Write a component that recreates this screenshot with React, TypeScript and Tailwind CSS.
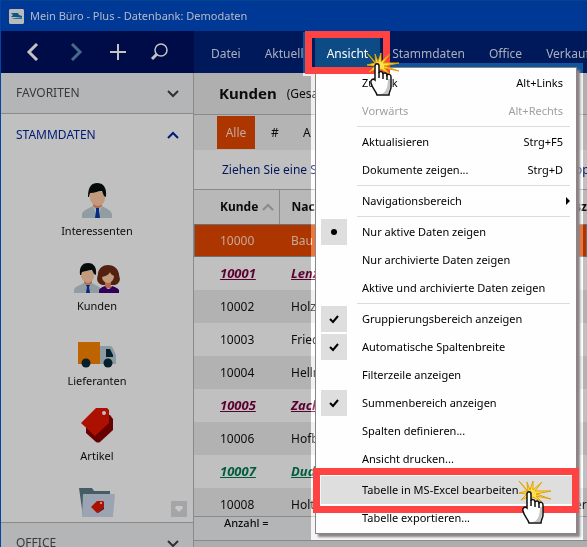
import React from "react";

type MenuEntry =
  | "separator"
  | { label: string; shortcut?: string; mark?: "check" | "dot"; disabled?: boolean; submenu?: boolean; active?: boolean };

const menuEntries: MenuEntry[] = [
  { label: "Zurück", shortcut: "Alt+Links" },
  { label: "Vorwärts", shortcut: "Alt+Rechts", disabled: true },
  "separator",
  { label: "Aktualisieren", shortcut: "Strg+F5" },
  { label: "Dokumente zeigen...", shortcut: "Strg+D" },
  "separator",
  { label: "Navigationsbereich", submenu: true },
  "separator",
  { label: "Nur aktive Daten zeigen", mark: "dot" },
  { label: "Nur archivierte Daten zeigen" },
  { label: "Aktive und archivierte Daten zeigen" },
  "separator",
  { label: "Gruppierungsbereich anzeigen", mark: "check" },
  { label: "Automatische Spaltenbreite", mark: "check" },
  { label: "Filterzeile anzeigen" },
  { label: "Summenbereich anzeigen", mark: "check" },
  { label: "Spalten definieren..." },
  { label: "Ansicht drucken..." },
  "separator",
  { label: "Tabelle in MS-Excel bearbeiten", active: true },
  { label: "Tabelle exportieren..." },
];

const rows = [
  { id: "10000", name: "Bau", tone: "selected" },
  { id: "10001", name: "Lenz", tone: "purple" },
  { id: "10002", name: "Holz", tone: "plain" },
  { id: "10003", name: "Fried", tone: "plain" },
  { id: "10004", name: "Hellm", tone: "plain" },
  { id: "10005", name: "Zach", tone: "purple" },
  { id: "10006", name: "Hofb", tone: "plain" },
  { id: "10007", name: "Duda", tone: "green" },
  { id: "10008", name: "Holt", tone: "plain", extra: "er" },
];

const toneClass: Record<string, string> = {
  selected: "text-[#c4aa98]",
  purple: "text-[13px] font-bold italic underline text-[#5a0030]",
  green: "text-[13px] font-bold italic underline text-[#005c3c]",
  plain: "text-[#0c0c0c]",
};

function Chevron({ d, color, width = 2 }: { d: string; color: string; width?: number }) {
  return (
    <svg width="18" height="18" viewBox="0 0 18 18" fill="none" stroke={color} strokeWidth={width} aria-hidden="true">
      <path d={d} />
    </svg>
  );
}

function ManIcon() {
  return (
    <svg width="30" height="35" viewBox="0 0 30 35" aria-hidden="true">
      <path d="M11 20h9v7h-9z" fill="#b5694f" />
      <path d="M0 35v-4c1-4 6-5 11-8l4 3 5-3c5 3 9 4 10 8v4z" fill="#909da2" />
      <path d="M11 23l4 4 5-4-4 9h-2z" fill="#a9b3b6" />
      <path d="M14 25h3v3l1 7h-5l1-7z" fill="#062a7d" />
      <path d="M8 9h15v6c0 4-3 8-7 8s-8-4-8-8z" fill="#c29a7c" />
      <path d="M6 14C6 3 10 0 15 0c6 0 10 4 9 14l-2-1-2-5c-4 0-7 2-12 2l-1 4z" fill="#070b0c" />
    </svg>
  );
}

function CoupleIcon() {
  return (
    <svg width="46" height="30" viewBox="0 0 46 30" aria-hidden="true">
      <path d="M10 17h8v7h-8z" fill="#b5694f" />
      <path d="M0 30v-3c1-4 5-4 10-7l4 3 4-3c5 3 8 3 9 7v3z" fill="#909da2" />
      <path d="M12 22h4l-1 2 1 6h-4l1-6z" fill="#062a7d" />
      <path d="M7 8h13v5c0 3-3 7-6 7s-7-4-7-7z" fill="#c29a7c" />
      <path d="M6 12C5 3 9 0 14 0s9 3 8 12l-2-1-2-4c-3 0-6 1-10 2l-1 3z" fill="#070b0c" />
      <path d="M24 19c-2-3 0-6 0-9 1-5 5-8 10-8s10 3 11 9c0 3 2 5 0 8-2 4-6 3-10 3s-9 1-11-3z" fill="#52210f" />
      <path d="M31 17h6v8h-6z" fill="#b5694f" />
      <path d="M25 30v-3c1-2 3-3 6-4 2 4 5 4 7 0 3 1 6 2 7 4v3z" fill="#330057" />
      <path d="M28 14c5-1 7-3 8-5 1 3 3 3 4 4 0 4-3 7-6 7s-6-3-6-6z" fill="#c29a7c" />
    </svg>
  );
}

function TruckIcon() {
  return (
    <svg width="38" height="26" viewBox="0 0 38 26" aria-hidden="true">
      <path d="M0 0h22v22H0z" fill="#bd6400" />
      <path d="M22 4h10c3 0 4 5 6 9v9H22z" fill="#8b9ba4" />
      <path d="M28 7h4l3 6v2h-7z" fill="#06202b" />
      <circle cx="8" cy="21" r="4.500" fill="#071f2b" />
      <circle cx="30" cy="21" r="4.500" fill="#071f2b" />
    </svg>
  );
}

function TagIcon() {
  return (
    <svg width="32" height="36" viewBox="0 0 32 36" aria-hidden="true">
      <path d="M20 8h9l3 4v11L19 35q-2 1-4 0L5 26v-5z" fill="#690000" />
      <path d="M15 1h11l2 2v13L14 29 0 16z" fill="#ab1000" />
      <circle cx="23" cy="6" r="2" fill="#c0c0c0" />
    </svg>
  );
}

function FolderIcon() {
  return (
    <svg width="36" height="29" viewBox="0 0 36 29" aria-hidden="true">
      <path d="M0 0h13l2 3h16v15L4 28z" fill="#455d64" />
      <path d="M4 6h32l-2 23H3z" fill="#9aa4b2" />
      <path d="M18 13h6l1 1v5l-7 6-6-6z" fill="#ab1000" />
      <path d="M18 25l7-6v2l-6 4z" fill="#690000" />
      <circle cx="22" cy="15" r="1" fill="#c0c0c0" />
    </svg>
  );
}

const sideItems = [
  { label: "Interessenten", icon: <ManIcon /> },
  { label: "Kunden", icon: <CoupleIcon /> },
  { label: "Lieferanten", icon: <TruckIcon /> },
  { label: "Artikel", icon: <TagIcon /> },
];

function SideHeading({ label, open }: { label: string; open?: boolean }) {
  return (
    <button
      className={
        "flex w-full shrink-0 items-center justify-between pl-[15px] pr-[11px] " +
        (open ? "h-[42px] bg-[#c0c0c0] text-[#001a78]" : "h-10 bg-[#b3b5b7] text-[#3a3a3a]")
      }
    >
      {label}
      <Chevron d={open ? "M4 12l5-5 5 5" : "M4 7l5 5 5-5"} color={open ? "#001a78" : "#303030"} />
    </button>
  );
}

function ClickHand({ className }: { className: string }) {
  return (
    <svg className={"pointer-events-none absolute z-30 " + className} width="40" height="48" viewBox="0 0 40 48" aria-hidden="true">
      <path
        d="M4 3l9 10-1-9 3 8 3-9v9l9-8-7 9 16 0-15 3 15 5-15-3 6 6-9-5-6 5 3-6-9 4 6-6-8-1 8-2z"
        fill="#ffe04f"
        stroke="#e3a400"
        strokeWidth="1"
        strokeLinejoin="bevel"
      />
      <path
        d="M12 16c0-3 4-3 4 0v7c0-2 4-2 4 1 1-2 4-1 4 1 2-2 4 0 4 2v10c0 3-2 4-2 8H14c-1-4-5-7-6-12-1-3 2-5 4-3z"
        fill="#fff"
        stroke="#111"
        strokeWidth="1.500"
      />
      <path d="M25 29h2v8c0 3-2 4-2 7h-7c4-1 7-5 7-15z" fill="#c4c4c4" />
      <path d="M16 22v6m4-5v6m4-4v5" stroke="#111" strokeWidth="1.500" />
    </svg>
  );
}

function ViewMenu() {
  return (
    <div
      role="menu"
      aria-label="Ansicht"
      className="absolute left-[314px] top-[67px] z-10 w-[262px] border border-[#8c8385] bg-[#fefefe] pb-px pl-[5px] pr-0.5 pt-px shadow-[3px_3px_2px_#8c8385]"
    >
      {menuEntries.map((e, i) =>
        e === "separator" ? (
          <div key={i} role="separator" className="ml-9 mr-1 h-[3px] border-y border-b-[#fefefe] border-t-[#fefefe] bg-[#dcdcdc]" />
        ) : (
          <button
            key={i}
            role={e.mark ? "menuitemcheckbox" : "menuitem"}
            aria-checked={e.mark ? true : undefined}
            disabled={e.disabled}
            className={
              "flex h-7 w-full items-center text-left text-[11px] " +
              (e.active ? "bg-[#dedede] " : "") +
              (e.disabled ? "text-[#a0a0a0]" : "text-black")
            }
          >
            <span className={"mr-[15px] flex size-[26px] shrink-0 items-center justify-center " + (e.mark ? "bg-[#dedede]" : "")}>
              {e.mark === "dot" && <span className="size-1.5 rounded-full bg-black" />}
              {e.mark === "check" && (
                <svg width="10" height="10" viewBox="0 0 10 10" fill="none" stroke="#000" strokeWidth="2" aria-hidden="true">
                  <path d="M1 5l3 3 5-6" />
                </svg>
              )}
            </span>
            <span className="grow whitespace-nowrap">{e.label}</span>
            {e.shortcut && <span className="mr-[11px] whitespace-nowrap">{e.shortcut}</span>}
            {e.submenu && (
              <svg className="mr-1" width="4" height="8" viewBox="0 0 4 8" aria-hidden="true">
                <path d="M0 0l4 4-4 4z" />
              </svg>
            )}
          </button>
        ),
      )}
    </div>
  );
}

export default function App() {
  return (
    <div className="relative flex h-screen min-h-[540px] flex-col overflow-hidden border-l border-[#0046a6] bg-[#c0c0c0] font-['Noto_Sans','Open_Sans',sans-serif] text-[12px]">
      <header className="flex h-[31px] shrink-0 items-center gap-1.5 border-t border-[#004390] bg-[#003896] pl-2 text-[11px] text-[#b4bac8]">
        <svg width="15" height="15" viewBox="0 0 15 15" aria-hidden="true">
          <path d="M0 1l1-1h13l1 1v13l-1 1H1l-1-1z" fill="#bababa" />
          <path d="M2 4h7l1 2 3 1v1H2l2-2z" fill="#0d5788" />
          <path d="M2 10l4-1 7-1v2H2z" fill="#1d77aa" />
        </svg>
        <h1>Mein Büro - Plus - Datenbank: Demodaten</h1>
      </header>

      <div className="flex h-[42px] shrink-0 bg-[#00195a]">
        <div className="flex w-[193px] shrink-0 items-center bg-[#000c48] pl-[23px]">
          <button aria-label="Zurück" className="mr-[25px]">
            <Chevron d="M13 1L5 9l8 8" color="#c3c3c3" width={3} />
          </button>
          <button aria-label="Vorwärts" className="mr-6">
            <Chevron d="M5 1l8 8-8 8" color="#466b87" width={3} />
          </button>
          <button aria-label="Neu" className="mr-[23px]">
            <Chevron d="M9 1v16M1 9h16" color="#c3c3c3" />
          </button>
          <button aria-label="Suchen">
            <svg width="18" height="18" viewBox="0 0 18 18" fill="none" stroke="#c3c3c3" aria-hidden="true">
              <circle cx="11" cy="7" r="6" strokeWidth="1.500" />
              <path d="M7 11l-5 5" strokeWidth="3" />
            </svg>
          </button>
        </div>
        <nav className="flex min-w-0 grow overflow-hidden pl-[5px] text-[#a9b0bd]">
          <button className="px-3 pt-1">Datei</button>
          <button className="w-[62px] shrink-0 overflow-hidden px-3 pt-1 text-left">Aktuell</button>
          <button className="bg-[#0d4b85] px-3 pt-1 text-white">Ansicht</button>
          <button className="px-3 pt-1">Stammdaten</button>
          <button className="px-3 pt-1">Office</button>
          <button className="px-3 pt-1">Verkauf</button>
        </nav>
      </div>

      <div className="flex min-h-0 grow">
        <aside className="flex w-[193px] shrink-0 flex-col border-r border-[#8a8a8a]">
          <div className="border-b border-[#8a8a8a]">
            <SideHeading label="FAVORITEN" />
          </div>
          <SideHeading label="STAMMDATEN" open />
          <div className="relative flex min-h-0 grow flex-col overflow-hidden pt-3">
            {sideItems.map((s) => (
              <button key={s.label} className="flex h-[75px] shrink-0 flex-col items-center justify-end text-[11px] leading-4 text-[#0c0c0c]">
                {s.icon}
                <span className="pb-1 pt-[5px]">{s.label}</span>
              </button>
            ))}
            <button aria-label="Artikelkategorien" className="flex shrink-0 justify-center pt-5">
              <FolderIcon />
            </button>
            <button aria-label="Weitere" className="absolute bottom-[5px] right-1.5 flex size-4 items-center justify-center bg-[#a3a5a7]">
              <svg width="8" height="6" viewBox="0 0 8 6" aria-hidden="true">
                <path d="M1 0h6l1 2-4 4-4-4z" fill="#c8c8c8" />
              </svg>
            </button>
          </div>
          <div className="h-[25px] shrink-0 overflow-hidden border-t border-[#8a8a8a]">
            <SideHeading label="OFFICE" />
          </div>
        </aside>

        <main className="flex min-w-0 grow flex-col">
          <div className="flex h-[42px] shrink-0 items-center gap-2.5 border-b border-[#8a8a8a] bg-[#afafaf] pl-[25px] text-[#0c0c0c]">
            <h2 className="text-[15px] font-bold">Kunden</h2>
            <span>(Gesamt)</span>
          </div>
          <div className="flex h-[35px] shrink-0 items-center bg-[#b4b4b4] pl-[23px] text-[#0c0c0c]">
            <button className="mr-4 h-[33px] w-[38px] bg-[#ad3500] text-[#c4aa98]">Alle</button>
            <button className="mr-6 w-2">#</button>
            <button>A</button>
          </div>
          <div className="flex h-10 shrink-0 items-center justify-between overflow-hidden whitespace-nowrap border-b border-[#8a8a8a] pl-7 text-[#00155b]">
            <span>Ziehen Sie eine Spalte</span>
            <span className="w-3">op</span>
          </div>
          <div className="min-h-0 grow overflow-hidden">
            <table className="w-full table-fixed border-collapse text-left text-[#0c0c0c]">
              <thead>
                <tr className="h-[34px] bg-[#b8b8b8]">
                  <th className="w-[85px] border-r border-[#8a8a8a] pl-[26px]">
                    <span className="flex items-center gap-1">
                      Kunde
                      <svg width="12" height="8" viewBox="0 0 12 8" fill="none" stroke="#8a8a8a" strokeWidth="2" aria-hidden="true">
                        <path d="M1 7l5-5 5 5" />
                      </svg>
                    </span>
                  </th>
                  <th className="pl-3">Nachname</th>
                  <th className="w-3">sz</th>
                </tr>
              </thead>
              <tbody>
                {rows.map((r, i) => (
                  <tr
                    key={r.id}
                    className={
                      "h-[33px] " +
                      (r.tone === "selected" ? "bg-[#ad3500] outline outline-[#6e6e6e] -outline-offset-1 " : i % 2 ? "bg-[#c0c0c0] " : "bg-[#b2b2b2] ")
                    }
                  >
                    <td className={"pl-[26px] " + toneClass[r.tone]}>{r.id}</td>
                    <td className={"pl-3 " + toneClass[r.tone]}>{r.name}</td>
                    <td>{r.extra}</td>
                  </tr>
                ))}
              </tbody>
            </table>
          </div>
          <div className="flex h-[25px] shrink-0 border-y border-[#8a8a8a] bg-[#b3b5b7] pl-[30px] text-[11px] font-medium leading-3 text-[#0c0c0c]">
            Anzahl =
          </div>
          <div className="h-1.5 shrink-0 bg-[#adadad]" />
        </main>
      </div>

      {/* Lit area around the opened menu */}
      <div className="pointer-events-none absolute left-[302px] top-8 h-[41px] w-[3px] bg-[#10559b]" />
      <div className="pointer-events-none absolute left-[388px] top-[63px] h-[10px] w-[194px] bg-[#10559b]" />
      <div className="pointer-events-none absolute left-[302px] top-[73px] h-[3px] w-2 bg-[#404040] mix-blend-plus-lighter" />
      <div className="pointer-events-none absolute left-[310px] top-[73px] h-[467px] w-[272px] bg-[#404040] mix-blend-plus-lighter" />

      <ViewMenu />

      {/* Marked steps: open the menu, choose the entry */}
      <div className="pointer-events-none absolute left-[304px] top-[31px] z-20 h-[43px] w-[85px] border-[7px] border-[#ff4343]" />
      <div className="pointer-events-none absolute left-[312px] top-[468px] z-20 h-[45px] w-[266px] border-[7px] border-[#ff4343]" />
      <ClickHand className="left-[362px] top-[50px]" />
      <ClickHand className="left-[514px] top-[478px]" />
    </div>
  );
}
